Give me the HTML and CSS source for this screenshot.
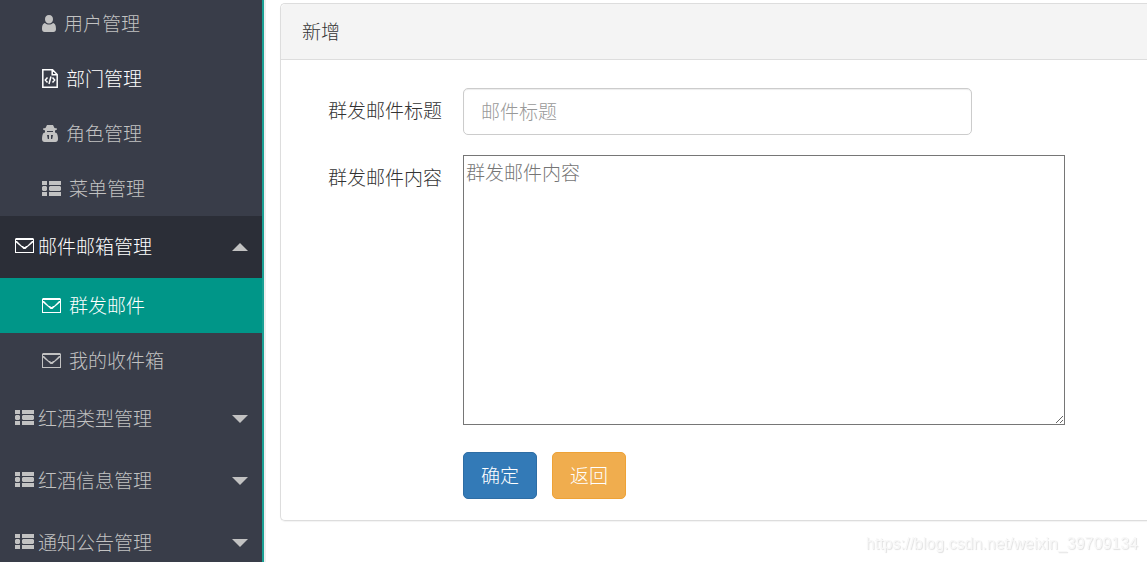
FILE: index.html
```html
<!DOCTYPE html>
<html lang="zh-CN">
<head>
  <meta charset="UTF-8">
  <title>群发邮件</title>
  <link rel="stylesheet" href="styles.css">
</head>
<body>
  <!-- 图标 -->
  <svg class="sprite" aria-hidden="true">
    <symbol id="i-user" viewBox="0 0 14 17">
      <path d="M7 0C9.600 0 11 1.800 11 4.200S9.500 8.600 7 8.600 3 6.600 3 4.200 4.400 0 7 0zM3 8C4.200 9.300 5.500 9.600 7 9.600s2.800-.3 4-1.600C13.200 8.300 14 11 14 14c0 1.700-1 3-2.600 3H2.600C1 17 0 15.700 0 14c0-3 .8-5.700 3-6z"/>
    </symbol>
    <symbol id="i-code" viewBox="0 0 16 19">
      <path fill="none" stroke="currentColor" stroke-width="1.500" d="M.8.8h9.700l4.700 4.700v12.700H.8zM10.200.8v5h5M5.500 8.500L3.300 11l2.200 2.500M10.500 8.500l2.200 2.500-2.200 2.500M9 7.500l-2 7.500"/>
    </symbol>
    <symbol id="i-secret" viewBox="0 0 16 17">
      <path fill-rule="evenodd" d="M5 0h6l1.500 3 2.500.5v1L13 5.500v2l1.500.5c1 1.200 1.500 3.500 1.500 6 0 1.800-1 3-2.600 3H2.600C1 17 0 15.800 0 14c0-2.500.5-4.800 1.500-6L3 7.500v-2l-2-1v-1L3.500 3zM5 6v1h6V6zM5 10l.8 4H7v-4zM9 10v4h1.200l.8-4z"/>
    </symbol>
    <symbol id="i-list" viewBox="0 0 19 15">
      <path d="M0 0h5v4H0zM7 0h12v4H7zM1 5h3l1 1v3l-1 1H1L0 9V6zM8 5h10l1 1v3l-1 1H8L7 9V6zM0 11h5v4H0zM7 11h12v4H7z"/>
    </symbol>
    <symbol id="i-mail" viewBox="0 0 19 15">
      <path fill-rule="evenodd" d="M1 0h17l1 1v14H0V1zM1 2v1h1l5 5h1l1 1h1l1-1h1l5-5h1V2zM1 4.500V14h17V4.500L12 9.500 10.500 11h-2L7 9.500z"/>
    </symbol>
  </svg>

  <div class="layout">
    <nav class="sidebar">
      <ul class="sub-menu sub-menu-first">
        <li><a href="#"><svg class="icon icon-user"><use href="#i-user"/></svg>用户管理</a></li>
        <li><a href="#" class="hover"><svg class="icon icon-code"><use href="#i-code"/></svg>部门管理</a></li>
        <li><a href="#"><svg class="icon icon-secret"><use href="#i-secret"/></svg>角色管理</a></li>
        <li><a href="#"><svg class="icon"><use href="#i-list"/></svg>菜单管理</a></li>
      </ul>
      <a href="#" class="menu-title open"><svg class="icon"><use href="#i-mail"/></svg>邮件邮箱管理<span class="arrow"></span></a>
      <ul class="sub-menu">
        <li><a href="#" class="active"><svg class="icon"><use href="#i-mail"/></svg>群发邮件</a></li>
        <li><a href="#"><svg class="icon"><use href="#i-mail"/></svg>我的收件箱</a></li>
      </ul>
      <a href="#" class="menu-title"><svg class="icon"><use href="#i-list"/></svg>红酒类型管理<span class="arrow"></span></a>
      <a href="#" class="menu-title"><svg class="icon"><use href="#i-list"/></svg>红酒信息管理<span class="arrow"></span></a>
      <a href="#" class="menu-title"><svg class="icon"><use href="#i-list"/></svg>通知公告管理<span class="arrow"></span></a>
    </nav>

    <main class="content">
      <div class="panel">
        <div class="panel-heading">新增</div>
        <form class="panel-body">
          <div class="form-row">
            <label for="title">群发邮件标题</label>
            <div class="field"><input type="text" id="title" name="title" class="form-control" placeholder="邮件标题"></div>
          </div>
          <div class="form-row">
            <label for="mail-content">群发邮件内容</label>
            <div class="field"><textarea id="mail-content" name="content" placeholder="群发邮件内容"></textarea></div>
          </div>
          <div class="form-actions">
            <button type="submit" class="btn btn-primary">确定</button>
            <button type="button" class="btn btn-warning">返回</button>
          </div>
        </form>
      </div>
    </main>
  </div>
  <div class="watermark">https://blog.csdn.net/weixin_39709134</div>
</body>
</html>
```
FILE: styles.css
```css
* {
  box-sizing: border-box;
}
body {
  margin: 0;
  font-family: "Noto Sans CJK SC", sans-serif;
  font-size: 19px;
  font-weight: 300;
  line-height: 27px;
  color: #333;
  background-color: #fff;
}
.sprite {
  display: none;
}
.layout {
  display: flex;
  height: 100vh;
  overflow: hidden;
}

/* 左侧菜单 */
.sidebar {
  flex: 0 0 264px;
  background-color: #393d49;
  border-right: 2px solid #1aa094;
  box-shadow: 2px 0 0 #eee;
  overflow: hidden;
}
.sidebar ul {
  list-style: none;
  margin: 0;
  padding: 0;
}
.sidebar a {
  display: flex;
  align-items: center;
  color: #c2c2c2;
  text-decoration: none;
}
.sidebar .sub-menu-first {
  margin-top: -4px;
}
.sub-menu a {
  height: 55px;
  padding: 0 0 2px 42px;
  gap: 8px;
}
.sidebar .hover,
.sidebar .open,
.sidebar .active {
  color: #fff;
}
.sidebar .active {
  background-color: #009688;
}
.menu-title {
  height: 62px;
  padding: 0 14px 4px 15px;
  gap: 4px;
}
.open {
  background-color: #2b2e37;
}
.icon {
  width: 19px;
  height: 15px;
  margin-top: 1px;
  fill: currentColor;
}
.icon-user {
  width: 14px;
  height: 17px;
}
.icon-code {
  width: 16px;
  height: 19px;
}
.icon-secret {
  width: 16px;
  height: 17px;
}
.arrow {
  margin-top: 4px;
  margin-left: auto;
  border: 8px solid transparent;
  border-top-color: #c2c2c2;
  border-bottom-width: 0;
}
.open .arrow {
  border-top-width: 0;
  border-bottom: 8px solid #c2c2c2;
}

/* 右侧内容 */
.content {
  flex: 1;
  min-width: 0;
  padding: 3px 0 0 16px;
}
.panel {
  border: 1px solid #ddd;
  border-right: none;
  border-radius: 5px 0 0 5px;
  box-shadow: 0 1px 1px rgba(0, 0, 0, 0.05);
}
.panel-heading {
  padding: 13px 21px 15px;
  background-color: #f4f4f4;
  border-bottom: 1px solid #ddd;
  border-radius: 5px 0 0 0;
}
.panel-body {
  padding: 28px 5px 21px 0;
}
.form-row {
  display: flex;
  margin-bottom: 20px;
}
.form-row label {
  flex: 0 0 182px;
  padding: 8px 21px 0 0;
  text-align: right;
}
.field {
  flex: 1;
}
.form-control {
  display: block;
  width: 75%;
  height: 47px;
  padding: 7px 17px 9px;
  font: inherit;
  color: #555;
  border: 1px solid #ccc;
  border-radius: 5px;
  box-shadow: inset 0 1px 1px rgba(0, 0, 0, 0.075);
}
.form-control::placeholder {
  color: #999;
}
textarea {
  display: block;
  width: 602px;
  max-width: 100%;
  height: 270px;
  padding: 2px;
  font: inherit;
  border: 1px solid #767676;
}
textarea::placeholder {
  color: #757575;
}
.form-actions {
  display: flex;
  gap: 15px;
  margin-top: 27px;
  padding-left: 182px;
}
.btn {
  height: 47px;
  padding: 0 17px 2px;
  font: inherit;
  color: #fff;
  border: 1px solid;
  border-radius: 5px;
  cursor: pointer;
}
.btn-primary {
  background-color: #337ab7;
  border-color: #2e6da4;
}
.btn-warning {
  background-color: #f0ad4e;
  border-color: #eea236;
}
.watermark {
  position: fixed;
  right: 9px;
  bottom: 5px;
  font-family: "Liberation Sans", Arial, sans-serif;
  font-size: 16px;
  font-weight: 400;
  color: #f8f8f8;
  text-shadow: 1px 1px 1px #e0e0e0;
}
```
